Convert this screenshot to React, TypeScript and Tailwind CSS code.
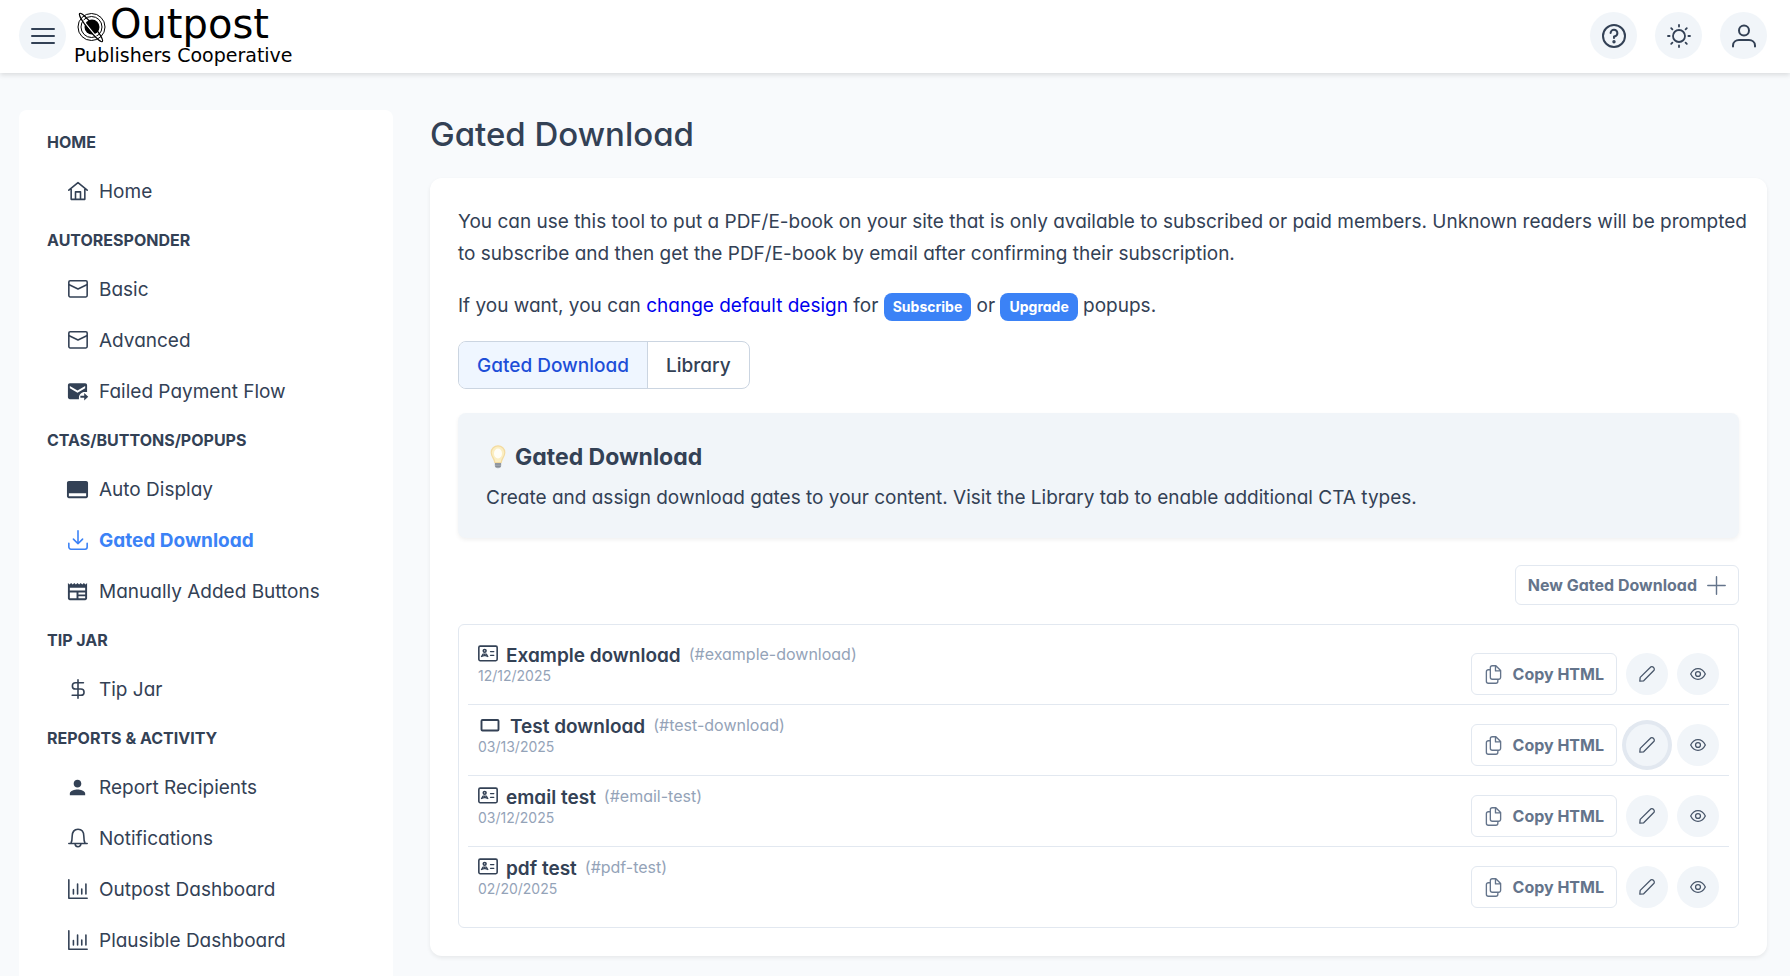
import type { ReactNode, SVGProps } from "react";
import { MdCallToAction, MdPerson, MdNewspaper } from "react-icons/md";

type IconProps = SVGProps<SVGSVGElement>;

function Svg({ children, ...rest }: IconProps & { children: ReactNode }) {
  return (
    <svg
      viewBox="0 0 24 24"
      fill="none"
      stroke="currentColor"
      strokeWidth="1.9"
      strokeLinecap="round"
      strokeLinejoin="round"
      aria-hidden="true"
      {...rest}
    >
      {children}
    </svg>
  );
}

const HomeIcon = (p: IconProps) => (
  <Svg {...p}>
    <path d="M1 11 12 2l11 9M3.800 9.500V22h16.400V9.500M9 22v-9h6v9" />
  </Svg>
);
const MailIcon = (p: IconProps) => (
  <Svg {...p}>
    <rect x="1" y="2" width="22" height="19.500" rx="1.600" />
    <path d="M1.500 7 12 12l10.500-5" />
  </Svg>
);
const ForwardMailIcon = (p: IconProps) => (
  <svg viewBox="0 0 24 24" fill="currentColor" aria-hidden="true" {...p}>
    <path d="M20 3.500H4c-1.100 0-2 .9-2 2v12.500c0 1.100.9 2 2 2h9.500v-1.500c0-3.300 2.700-6 6-6H22V5.500c0-1.100-.9-2-2-2zM20 8.500l-8 4.700-8-4.700V6.200l8 4.700 8-4.700z" />
    <path d="M19 13.500l4.200 4-4.200 4v-2.900h-4v-2.200h4z" />
  </svg>
);
const DownloadIcon = (p: IconProps) => (
  <Svg {...p}>
    <path d="M12 1v15.500M6.500 11l5.500 5.500 5.500-5.500M1 16v4.500A2.500 2.500 0 0 0 3.500 23h17a2.500 2.500 0 0 0 2.500-2.500V16" />
  </Svg>
);
const DollarIcon = (p: IconProps) => (
  <Svg {...p}>
    <path d="M12 1v22M18.500 4.500H9a3.700 3.700 0 0 0 0 7.500h6.500a3.700 3.700 0 0 1 0 7.500H5" />
  </Svg>
);
const BellIcon = (p: IconProps) => (
  <Svg {...p}>
    <path d="M1 18.500h22M3.500 18.500C5 16 5 13.500 5 10c0-5 2.500-8.500 7-8.500S19 5 19 10c0 3.500 0 6 1.500 8.500M8.500 19a3.500 3.500 0 0 0 7 0" />
  </Svg>
);
const ChartIcon = (p: IconProps) => (
  <Svg {...p}>
    <path d="M1 1v22h22M6.500 12.500v5.500M11.500 6v12M16.500 12v6M21.500 6v12" />
  </Svg>
);
const MenuIcon = (p: IconProps) => (
  <Svg {...p} strokeWidth="2">
    <path d="M1 5h22M1 12h22M1 19h22" />
  </Svg>
);
const HelpIcon = (p: IconProps) => (
  <Svg {...p} strokeWidth="2">
    <circle cx="12" cy="12" r="11" />
    <path d="M8.600 9a3.400 3.400 0 1 1 3.400 3.500v1.600" />
    <circle cx="12" cy="17.800" r=".7" fill="currentColor" />
  </Svg>
);
const SunIcon = (p: IconProps) => (
  <Svg {...p} strokeWidth="1.800">
    <circle cx="12" cy="12" r="6" />
    <path d="M12 1v1.600M12 21.400V23M1 12h1.600M21.400 12H23M4.200 4.200l1.200 1.200M18.600 18.600l1.200 1.200M4.200 19.800l1.200-1.200M18.600 5.400l1.200-1.200" />
  </Svg>
);
const UserIcon = (p: IconProps) => (
  <Svg {...p} strokeWidth="2">
    <circle cx="12" cy="6.500" r="5" />
    <path d="M1 22.500v-1c0-3.500 3-5.500 6-5.500h10c3 0 6 2 6 5.500v1" />
  </Svg>
);
const PlusIcon = (p: IconProps) => (
  <Svg {...p} strokeWidth="1.800">
    <path d="M12 1v22M1 12h22" />
  </Svg>
);
const CopyIcon = (p: IconProps) => (
  <Svg {...p} strokeWidth="1.700">
    <path d="M10.500 1H15l6 6v8.500a2.500 2.500 0 0 1-2.500 2.500h-8A2.500 2.500 0 0 1 8 15.500v-12A2.500 2.500 0 0 1 10.500 1zM14.500 1.500V7.500H20.500M8 6H5.500A2.500 2.500 0 0 0 3 8.500v12A2.500 2.500 0 0 0 5.500 23h9.500a2.500 2.500 0 0 0 2.500-2.500V18" />
  </Svg>
);
const PencilIcon = (p: IconProps) => (
  <Svg {...p}>
    <path d="M1.200 22.800 1.800 17 16.800 2.200a3.300 3.300 0 0 1 5 0 3.300 3.300 0 0 1 0 5L7 22.200z" />
  </Svg>
);
const EyeIcon = (p: IconProps) => (
  <Svg {...p}>
    <path d="M1 12c2.500-5 6.500-8 11-8s8.500 3 11 8c-2.500 5-6.500 8-11 8S3.500 17 1 12z" />
    <circle cx="12" cy="12" r="3.700" />
  </Svg>
);
const CardIcon = (p: IconProps) => (
  <Svg {...p}>
    <rect x="1" y="2.500" width="22" height="17.500" rx="1.600" />
    <circle cx="8" cy="8.200" r="1.700" />
    <path d="M4.200 15 6 12h4l1.800 3L8 13.700zM15 9h4M15 13.500h4" strokeWidth="1.500" />
  </Svg>
);
const RectIcon = (p: IconProps) => (
  <Svg {...p} strokeWidth="1.900">
    <rect x="3.500" y="7" width="17" height="10.500" rx="1" />
  </Svg>
);
const BulbIcon = (p: IconProps) => (
  <svg viewBox="0 0 24 24" aria-hidden="true" {...p}>
    <path d="M8.800 17h6.400v3.500a3.200 2.800 0 0 1-6.400 0z" fill="#a3a9b1" />
    <path d="M9 19h6M9.500 21.300h5" stroke="#7c828b" strokeWidth=".9" />
    <path
      d="M12 .8a6.800 6.800 0 0 0-6.800 6.800c0 4.300 3.100 5.400 3.600 9.900h6.400c.5-4.500 3.600-5.600 3.600-9.900A6.800 6.800 0 0 0 12 .8z"
      fill="#fbeec2"
      stroke="#f3dba0"
      strokeWidth="1.200"
    />
    <ellipse cx="12" cy="8.500" rx="4" ry="5" fill="#fffdf6" />
  </svg>
);
const PlanetIcon = (p: IconProps) => (
  <svg viewBox="0 0 30 32" fill="none" stroke="#000" aria-hidden="true" {...p}>
    <circle cx="16.500" cy="15" r="13.500" strokeWidth="1" />
    <circle cx="16.500" cy="15" r="10.500" strokeWidth="1" />
    <circle cx="17" cy="15" r="7.500" fill="#000" stroke="none" />
    <path d="M8 8.500 21.500 25" stroke="#fff" strokeWidth="1.200" />
    <ellipse cx="16" cy="15.500" rx="18" ry="3" transform="rotate(51 16 15.500)" strokeWidth="1.100" />
  </svg>
);

type NavItem = { label: string; icon: (p: any) => ReactNode; solid?: boolean; active?: boolean };

const sections: { title: string; items: NavItem[] }[] = [
  { title: "HOME", items: [{ label: "Home", icon: HomeIcon }] },
  {
    title: "AUTORESPONDER",
    items: [
      { label: "Basic", icon: MailIcon },
      { label: "Advanced", icon: MailIcon },
      { label: "Failed Payment Flow", icon: ForwardMailIcon, solid: true },
    ],
  },
  {
    title: "CTAS/BUTTONS/POPUPS",
    items: [
      { label: "Auto Display", icon: MdCallToAction, solid: true },
      { label: "Gated Download", icon: DownloadIcon, active: true },
      { label: "Manually Added Buttons", icon: MdNewspaper, solid: true },
    ],
  },
  { title: "TIP JAR", items: [{ label: "Tip Jar", icon: DollarIcon }] },
  {
    title: "REPORTS & ACTIVITY",
    items: [
      { label: "Report Recipients", icon: MdPerson, solid: true },
      { label: "Notifications", icon: BellIcon },
      { label: "Outpost Dashboard", icon: ChartIcon },
      { label: "Plausible Dashboard", icon: ChartIcon },
    ],
  },
];

const downloads = [
  { name: "Example download", slug: "(#example-download)", date: "12/12/2025", icon: CardIcon },
  { name: "Test download", slug: "(#test-download)", date: "03/13/2025", icon: RectIcon, wide: true, focused: true },
  { name: "email test", slug: "(#email-test)", date: "03/12/2025", icon: CardIcon },
  { name: "pdf test", slug: "(#pdf-test)", date: "02/20/2025", icon: CardIcon },
];

function RoundButton({ label, children }: { label: string; children: ReactNode }) {
  return (
    <button type="button" aria-label={label} className="flex size-[47px] items-center justify-center rounded-full bg-[#f1f5f9]">
      {children}
    </button>
  );
}

function Header() {
  return (
    <header className="relative flex h-[73px] items-start justify-between bg-white pt-3 pr-[23px] pl-[19px] shadow-[0_2px_5px_rgba(0,0,0,0.12)]">
      <div className="flex items-start gap-2">
        <RoundButton label="Toggle menu">
          <MenuIcon className="size-6" />
        </RoundButton>
        <a href="#home" className="block font-['DejaVu_Sans',sans-serif] text-black">
          <span className="flex h-[35px] items-start gap-1">
            <PlanetIcon className="size-8" />
            <span className="text-[40px] leading-6">Outpost</span>
          </span>
          <span className="block text-[19px] leading-4">Publishers Cooperative</span>
        </a>
      </div>
      <div className="flex gap-[18px]">
        <RoundButton label="Help">
          <HelpIcon className="size-6" />
        </RoundButton>
        <RoundButton label="Toggle theme">
          <SunIcon className="size-6" />
        </RoundButton>
        <RoundButton label="Account">
          <UserIcon className="size-6" />
        </RoundButton>
      </div>
    </header>
  );
}

function Sidebar() {
  return (
    <nav className="w-[374px] shrink-0 rounded-t-lg bg-white px-7 pt-2">
      {sections.map((section) => (
        <section key={section.title}>
          <h2 className="flex h-[47px] items-center text-base font-bold">{section.title}</h2>
          <ul>
            {section.items.map(({ label, icon: Icon, solid, active }) => (
              <li key={label}>
                <a
                  href="#nav"
                  className={
                    active
                      ? "flex h-[51px] items-center gap-[10px] pt-1 pl-[19px] font-bold text-[#3b82f6]"
                      : "flex h-[51px] items-center gap-[10px] pt-1 pl-[19px]"
                  }
                >
                  <span className="flex h-[26px] w-[23px] items-start justify-center">
                    <Icon className={solid ? "size-[23px]" : "mt-px size-5"} />
                  </span>
                  {label}
                </a>
              </li>
            ))}
          </ul>
        </section>
      ))}
    </nav>
  );
}

function DownloadList() {
  return (
    <ul className="mt-[19px] rounded-md border border-[#e2e8f0] p-[9px]">
      {downloads.map(({ name, slug, date, icon: Icon, wide, focused }) => (
        <li key={name} className="flex h-[71px] justify-between border-b border-[#e2e8f0] px-[10px] pt-[10px] last:border-b-0">
          <div>
            <div className="flex h-6 items-center">
              <Icon className={wide ? "mr-2 mb-1 size-6" : "mr-2 mb-1 size-5"} />
              <span className="font-semibold">{name}</span>
              <span className="mb-1 ml-2 text-base text-[#94a3b8]">{slug}</span>
            </div>
            <div className="text-sm leading-4 text-[#94a3b8]">{date}</div>
          </div>
          <div className="flex items-start gap-[9px] pt-[9px]">
            <button
              type="button"
              className="flex h-[42px] items-center gap-[10px] rounded-md border border-[#e2e8f0] px-3 text-base font-bold text-[#64748b]"
            >
              <CopyIcon className="size-[19px]" />
              Copy HTML
            </button>
            <button
              type="button"
              aria-label={`Edit ${name}`}
              className={
                focused
                  ? "flex size-[42px] items-center justify-center rounded-full bg-[#f1f5f9] text-[#475569] ring-4 ring-[#e2e8f0]"
                  : "flex size-[42px] items-center justify-center rounded-full bg-[#f1f5f9] text-[#475569]"
              }
            >
              <PencilIcon className="size-4" />
            </button>
            <button
              type="button"
              aria-label={`Preview ${name}`}
              className="flex size-[42px] items-center justify-center rounded-full bg-[#f1f5f9] text-[#475569]"
            >
              <EyeIcon className="size-4" />
            </button>
          </div>
        </li>
      ))}
    </ul>
  );
}

function Badge({ children }: { children: ReactNode }) {
  return (
    <span className="inline-flex h-7 items-center rounded-lg bg-[#3b82f6] px-[9px] align-middle text-sm font-bold text-white">
      {children}
    </span>
  );
}

export default function App() {
  return (
    <div className="min-h-screen bg-[#f8fafc] font-['Inter',sans-serif] text-[19px] font-normal text-[#334155] [font-feature-settings:'cv02','cv03','cv04','cv11']">
      <Header />
      <div className="flex gap-[37px] pt-[37px] pr-[23px] pl-[19px]">
        <Sidebar />
        <main className="min-w-0 flex-1 pb-5">
          <h1 className="h-[68px] text-[33px] leading-[48px] font-medium">Gated Download</h1>
          <div className="rounded-xl bg-white p-7 shadow-[0_2px_4px_rgba(0,0,0,0.07)]">
            <p className="-mr-3 leading-8">
              You can use this tool to put a PDF/E-book on your site that is only available to subscribed or paid
              members. Unknown readers will be prompted to subscribe and then get the PDF/E-book by email after
              confirming their subscription.
            </p>
            <p className="mt-5 leading-8">
              If you want, you can{" "}
              <a href="#design" className="text-[#0000ee]">
                change default design
              </a>{" "}
              for <Badge>Subscribe</Badge> or <Badge>Upgrade</Badge> popups.
            </p>
            <div role="tablist" className="mt-[19px] inline-flex h-12 overflow-hidden rounded-lg border border-[#cbd5e1] align-top font-medium">
              <button type="button" role="tab" aria-selected="true" className="border-r border-[#cbd5e1] bg-[#eff6ff] px-[18px] pt-0.5 text-[#1d4ed8]">
                Gated Download
              </button>
              <button type="button" role="tab" aria-selected="false" className="px-[18px] pt-0.5">
                Library
              </button>
            </div>
            <section className="mt-6 rounded-lg bg-[#f1f5f9] p-7 shadow-[0_2px_4px_rgba(0,0,0,0.06)]">
              <h2 className="flex h-8 items-center gap-[5px] text-[23px] font-bold">
                <BulbIcon className="size-6" />
                Gated Download
              </h2>
              <p className="mt-[13px] leading-6">
                Create and assign download gates to your content. Visit the Library tab to enable additional CTA types.
              </p>
            </section>
            <div className="mt-[27px] flex justify-end">
              <button
                type="button"
                className="flex h-10 items-center gap-[10px] rounded-md border border-[#e2e8f0] px-3 text-base font-bold text-[#64748b]"
              >
                New Gated Download
                <PlusIcon className="size-[19px]" />
              </button>
            </div>
            <DownloadList />
          </div>
        </main>
      </div>
    </div>
  );
}
